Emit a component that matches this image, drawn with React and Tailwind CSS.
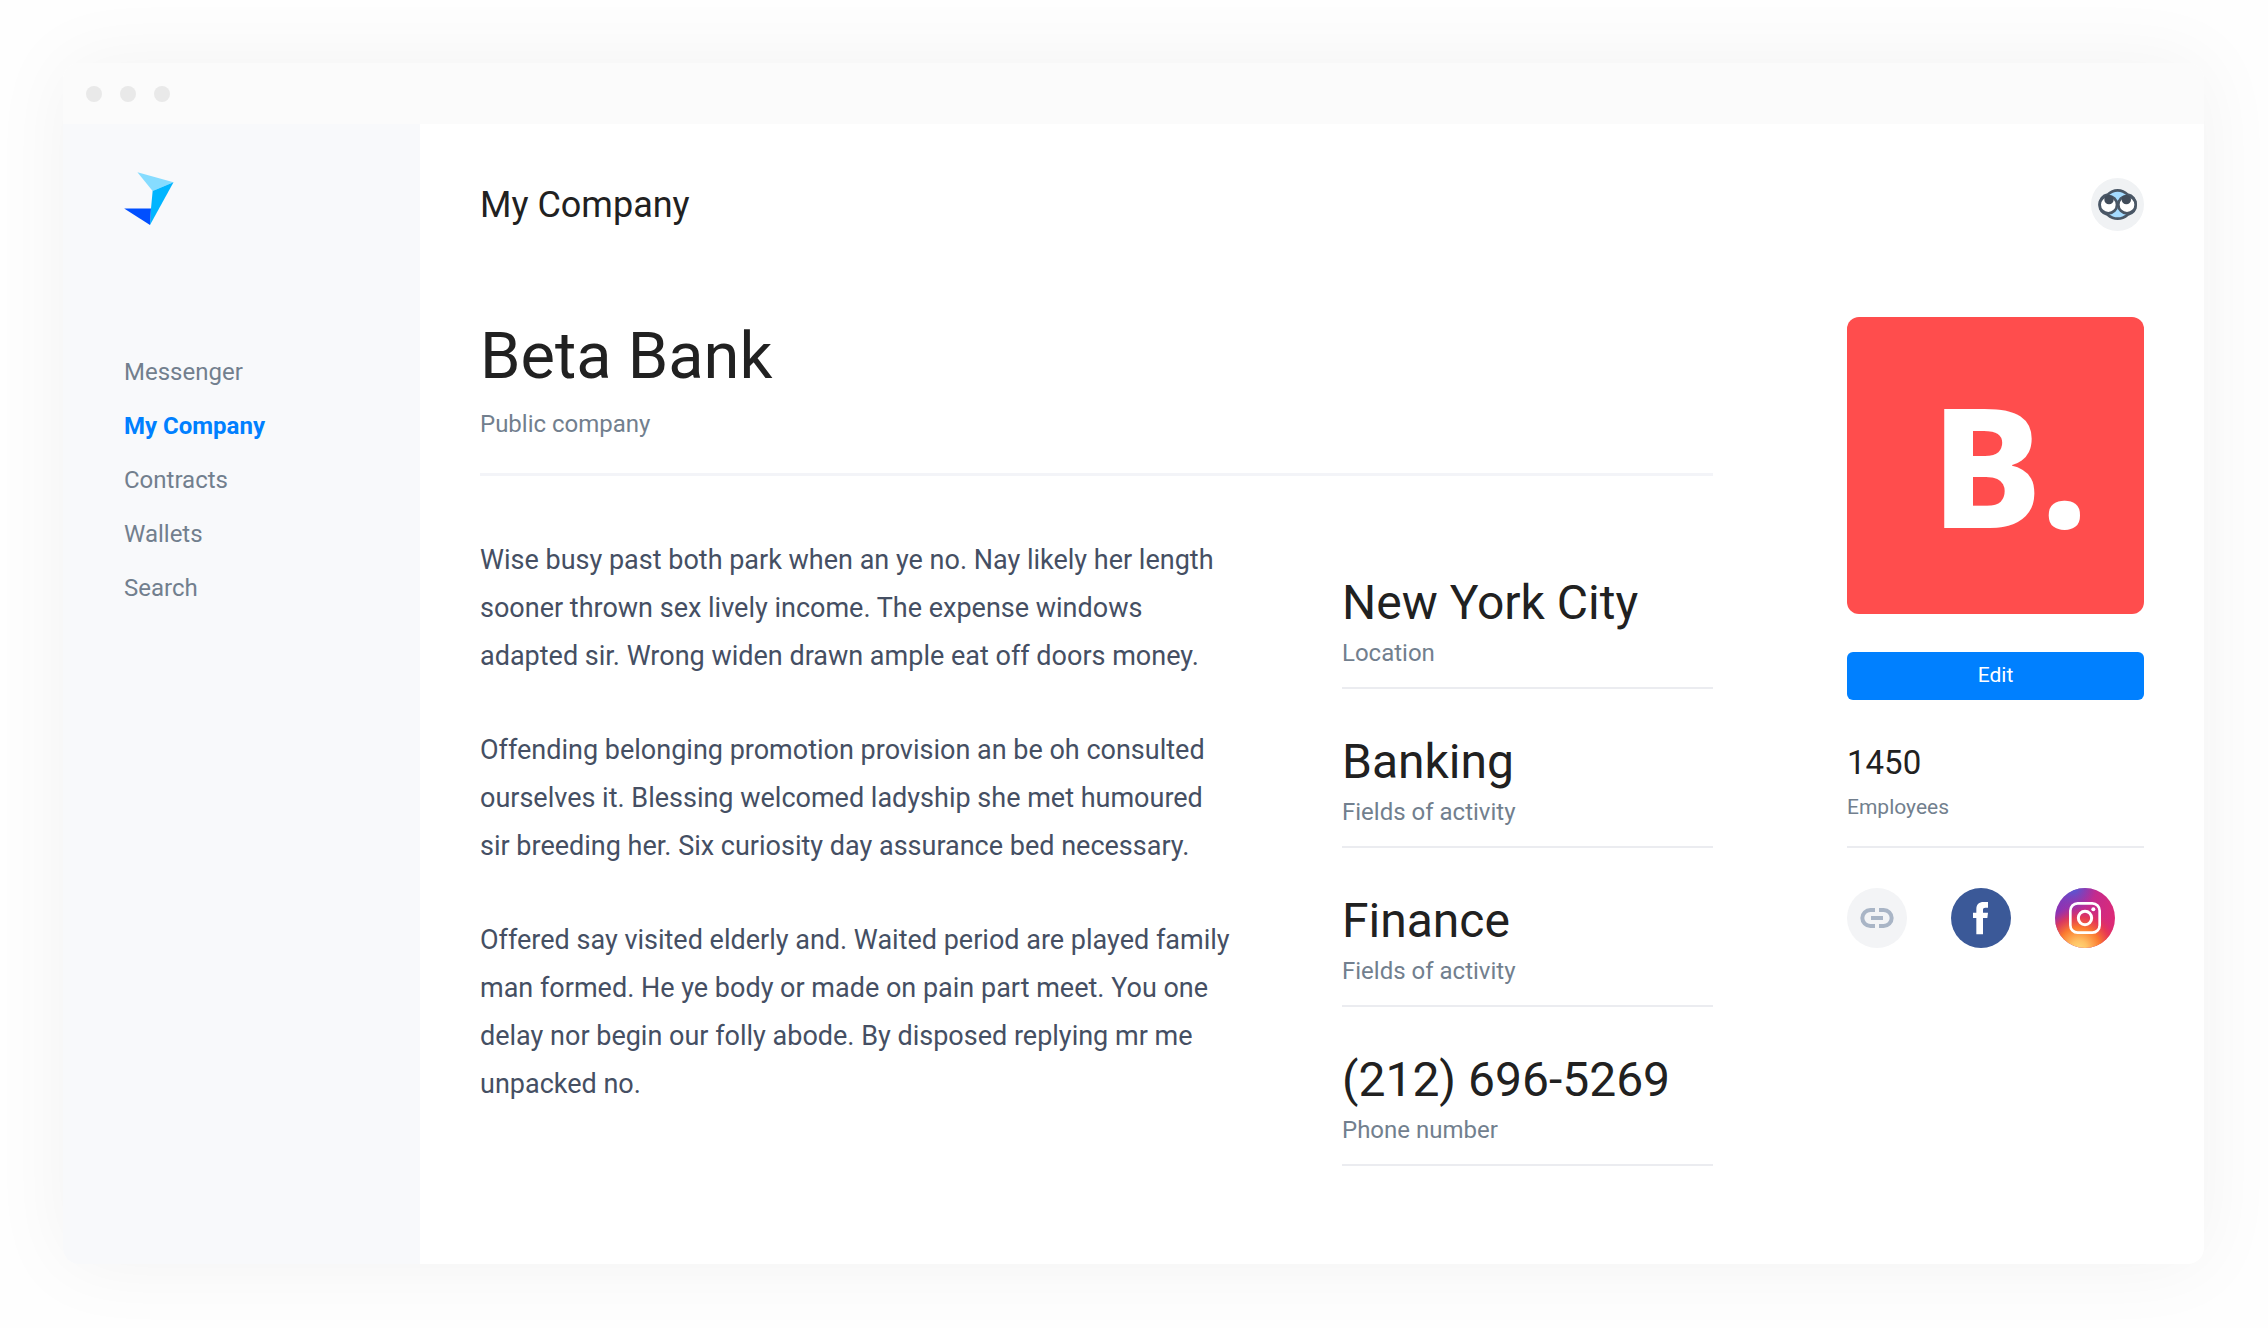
const NAV = [
  { label: "Messenger" },
  { label: "My Company", active: true },
  { label: "Contracts" },
  { label: "Wallets" },
  { label: "Search" },
];

const PARAGRAPHS = [
  "Wise busy past both park when an ye no. Nay likely her length sooner thrown sex lively income. The expense windows adapted sir. Wrong widen drawn ample eat off doors money.",
  "Offending belonging promotion provision an be oh consulted ourselves it. Blessing welcomed ladyship she met humoured sir breeding her. Six curiosity day assurance bed necessary.",
  "Offered say visited elderly and. Waited period are played family man formed. He ye body or made on pain part meet. You one delay nor begin our folly abode. By disposed replying mr me unpacked no.",
];

const FACTS = [
  { value: "New York City", label: "Location" },
  { value: "Banking", label: "Fields of activity" },
  { value: "Finance", label: "Fields of activity" },
  { value: "(212) 696-5269", label: "Phone number" },
];

function BirdLogo() {
  return (
    <svg viewBox="0 0 150 160" className="h-[53px] w-[50px]" aria-hidden="true">
      <path d="M40 1 L149 31 L86 57 Z" fill="#86dcff" />
      <path d="M149 31 L86 57 L81 110 L78 160 Z" fill="#00b5ff" />
      <path d="M0 110 L81 110 L78 160 Z" fill="#004fff" />
    </svg>
  );
}

function AvatarFace() {
  return (
    <svg viewBox="0 0 159 159" className="h-full w-full" aria-hidden="true">
      <path
        d="M80 37 C94 37 103 43 110 50 C125 52 134 65 134 80 C134 95 125 106 110 110 C102 117 94 122 80 122 C66 122 58 117 50 110 C35 106 26 95 26 80 C26 65 35 52 50 50 C57 43 66 37 80 37 Z"
        fill="#a5dbff"
        stroke="#4a5766"
        strokeWidth="8"
      />
      <circle cx="52" cy="80" r="26" fill="#fff" stroke="#4a5766" strokeWidth="8" />
      <circle cx="108" cy="80" r="26" fill="#fff" stroke="#4a5766" strokeWidth="8" />
      <circle cx="54" cy="65" r="14" fill="#414c5a" />
      <circle cx="106" cy="65" r="14" fill="#414c5a" />
    </svg>
  );
}

function LinkIcon() {
  return (
    <svg viewBox="0 0 180 180" className="h-full w-full" aria-hidden="true">
      <g fill="none" stroke="#a9b5c6" strokeWidth="12">
        <path d="M84 66 H70 A24 24 0 0 0 70 114 H84" />
        <path d="M96 66 H110 A24 24 0 0 1 110 114 H96" />
        <path d="M72 90 H108" />
      </g>
    </svg>
  );
}

function FacebookIcon() {
  return (
    <svg viewBox="0 0 180 180" className="h-full w-full" aria-hidden="true">
      <path
        d="M76 139 V90 H66 V74 H76 V64 C76 49 84 42 98 42 H111 V59 H103 C98 59 96 61 96 66 V74 H111 L109 90 H96 V139 Z"
        fill="#fff"
      />
    </svg>
  );
}

function InstagramIcon() {
  return (
    <svg viewBox="0 0 180 180" className="h-full w-full" aria-hidden="true">
      <defs>
        <linearGradient id="ig-base" x1="0.1" y1="0.3" x2="0.95" y2="0.6">
          <stop offset="0" stopColor="#8a35b5" />
          <stop offset="0.5" stopColor="#c32b8e" />
          <stop offset="1" stopColor="#dd2a76" />
        </linearGradient>
        <radialGradient id="ig-warm" cx="0.4" cy="1.02" r="0.72">
          <stop offset="0" stopColor="#ffd978" />
          <stop offset="0.2" stopColor="#ffc063" />
          <stop offset="0.5" stopColor="#fb7a2f" />
          <stop offset="0.75" stopColor="#ea3a4c" stopOpacity="0.8" />
          <stop offset="1" stopColor="#d42a78" stopOpacity="0" />
        </radialGradient>
        <radialGradient id="ig-cool" cx="0.3" cy="-0.02" r="0.4">
          <stop offset="0" stopColor="#4663dc" />
          <stop offset="1" stopColor="#7a3cc0" stopOpacity="0" />
        </radialGradient>
      </defs>
      <circle cx="90" cy="90" r="90" fill="url(#ig-base)" />
      <circle cx="90" cy="90" r="90" fill="url(#ig-warm)" />
      <circle cx="90" cy="90" r="90" fill="url(#ig-cool)" />
      <g fill="none" stroke="#fff">
        <rect x="46" y="46" width="88" height="88" rx="22" strokeWidth="8" />
        <circle cx="90" cy="90" r="20" strokeWidth="9" />
      </g>
      <circle cx="115" cy="64" r="6" fill="#fff" />
    </svg>
  );
}

export default function App() {
  return (
    <div className="flex min-h-screen flex-col bg-[#fefefe] p-16 pt-[63px] pl-[63px] font-['Roboto',sans-serif] text-[#212121]">
      <div className="flex flex-1 flex-col overflow-hidden rounded-2xl bg-white shadow-[0_0_80px_rgba(0,0,0,0.05)]">
        <div className="flex h-[61px] items-center gap-[18px] bg-[#fbfbfb] px-[23px]">
          <span className="size-4 rounded-full bg-[#e9e9e9]" />
          <span className="size-4 rounded-full bg-[#e9e9e9]" />
          <span className="size-4 rounded-full bg-[#e9e9e9]" />
        </div>

        <div className="flex flex-1">
          <aside className="w-[357px] shrink-0 bg-[#f8f9fb] px-[61px] pt-12">
            <a href="#home" aria-label="Home" className="block w-fit">
              <BirdLogo />
            </a>
            <nav className="mt-[120px]">
              <ul>
                {NAV.map((item) => (
                  <li key={item.label}>
                    <a
                      href="#nav"
                      aria-current={item.active ? "page" : undefined}
                      className={
                        item.active
                          ? "block text-2xl leading-[54px] font-bold text-[#0080ff]"
                          : "block text-2xl leading-[54px] text-[#727f8e]"
                      }
                    >
                      {item.label}
                    </a>
                  </li>
                ))}
              </ul>
            </nav>
          </aside>

          <main className="flex-1 px-[60px] pt-[54px] pb-[97px]">
            <header className="flex items-center justify-between">
              <h1 className="text-4xl">My Company</h1>
              <button type="button" aria-label="Account" className="size-[53px] rounded-full bg-[#f0f2f4]">
                <AvatarFace />
              </button>
            </header>

            <div className="mt-[86px] flex gap-[134px]">
              <section className="flex-1">
                <div className="border-b-[3px] border-[#f3f4f8] pb-[31px]">
                  <h2 className="text-[65px] leading-[78px]">Beta Bank</h2>
                  <p className="mt-[11px] text-2xl leading-9 text-[#727f8e]">Public company</p>
                </div>

                <div className="flex items-start justify-between pt-[60px]">
                  <div className="flex max-w-[752px] flex-col gap-[46px] text-[27px] leading-[48px] text-[#454f63]">
                    {PARAGRAPHS.map((text) => (
                      <p key={text}>{text}</p>
                    ))}
                  </div>
                  <dl className="flex w-[371px] shrink-0 flex-col gap-[45px] pt-[39px]">
                    {FACTS.map((fact) => (
                      <div key={fact.value} className="flex flex-col-reverse gap-[6px] border-b-2 border-[#ebecf0] pb-[18px]">
                        <dt className="text-2xl leading-8 text-[#727f8e]">{fact.label}</dt>
                        <dd className="text-5xl leading-[56px]">{fact.value}</dd>
                      </div>
                    ))}
                  </dl>
                </div>
              </section>

              <aside className="w-[297px] shrink-0">
                <div className="flex aspect-square items-center justify-center rounded-xl bg-[#ff4d4d] pb-1 pl-7 font-['Noto_Sans',sans-serif] text-[167px] leading-none font-extrabold text-white">
                  B.
                </div>
                <button type="button" className="mt-[38px] h-[48px] w-full rounded-md bg-[#0080ff] text-[21px] text-white">
                  Edit
                </button>
                <div className="mt-[41px] border-b-2 border-[#ebecf0] pb-[23px]">
                  <p className="text-[33px] leading-[44px]">1450</p>
                  <p className="mt-[6px] text-[21px] leading-8 text-[#727f8e]">Employees</p>
                </div>
                <div className="mt-10 flex gap-11">
                  <a href="#website" aria-label="Website" className="size-[60px] rounded-full bg-[#f3f4f6]">
                    <LinkIcon />
                  </a>
                  <a href="#facebook" aria-label="Facebook" className="size-[60px] rounded-full bg-[#3b5998]">
                    <FacebookIcon />
                  </a>
                  <a href="#instagram" aria-label="Instagram" className="size-[60px] rounded-full">
                    <InstagramIcon />
                  </a>
                </div>
              </aside>
            </div>
          </main>
        </div>
      </div>
    </div>
  );
}
